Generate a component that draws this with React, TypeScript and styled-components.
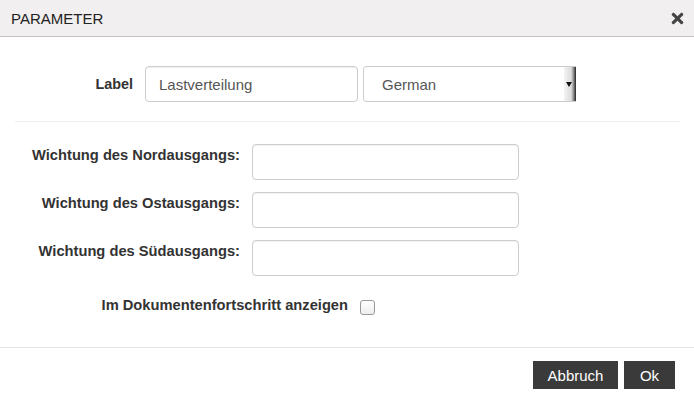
import React, { useState } from 'react';
import styled, { createGlobalStyle } from 'styled-components';
import { FaTimes } from 'react-icons/fa';

const GlobalStyle = createGlobalStyle`
  html, body {
    margin: 0;
    padding: 0;
    background: #fff;
    font-family: "Liberation Sans", Arial, sans-serif;
    color: #333;
  }
`;

const Dialog = styled.div`
  width: 694px;
  height: 402px;
  background: #fff;
  display: flex;
  flex-direction: column;
`;

const Header = styled.div`
  height: 37px;
  background: #f1efef;
  border-bottom: 1px solid #c3c3c3;
  display: flex;
  align-items: center;
  justify-content: space-between;
  padding: 0 8px 0 11px;
  box-sizing: border-box;
  flex-shrink: 0;
`;

const Title = styled.h4`
  margin: 0;
  font-size: 15px;
  font-weight: normal;
  color: #222;
  padding-top: 1px;
`;

const CloseButton = styled.button`
  border: none;
  background: none;
  padding: 0;
  color: #444;
  display: flex;
  cursor: pointer;
  margin-top: 1px;
`;

const Body = styled.div`
  flex: 1;
  padding-top: 29px;
`;

const LabelRow = styled.div`
  display: flex;
  align-items: center;
  gap: 5px;
`;

const LabelText = styled.label`
  width: 133px;
  text-align: right;
  font-weight: bold;
  font-size: 14.4px;
  color: #333;
  margin-right: 7px;
`;

const TextInput = styled.input<{ $width: number }>`
  width: ${({ $width }) => $width}px;
  height: 36px;
  box-sizing: border-box;
  border: 1px solid #ccc;
  border-radius: 4px;
  padding: 0 13px;
  font-family: "Liberation Sans", Arial, sans-serif;
  font-size: 15px;
  color: #555;
  box-shadow: inset 0 1px 1px rgba(0, 0, 0, 0.06);
  outline: none;
`;

const SelectBox = styled.div`
  width: 213px;
  height: 36px;
  box-sizing: border-box;
  border: 1px solid #ccc;
  border-right: none;
  border-radius: 4px 0 0 4px;
  display: flex;
  overflow: hidden;
`;

const Select = styled.select`
  flex: 1;
  appearance: none;
  border: none;
  background: #fff;
  padding: 0 18px;
  font-family: "Liberation Sans", Arial, sans-serif;
  font-size: 15px;
  color: #555;
  outline: none;
`;

const ArrowStrip = styled.div`
  width: 10px;
  background: linear-gradient(to right, #f4f4f4 0%, #dcdcdc 60%, #8a8a8a 80%, #222 100%);
  display: flex;
  align-items: center;
  justify-content: center;
  padding-right: 2px;
  &::after {
    content: '';
    border-left: 3px solid transparent;
    border-right: 3px solid transparent;
    border-top: 5px solid #111;
  }
`;

const Divider = styled.hr`
  margin: 19px 14px 22px 15px;
  border: none;
  border-top: 1px solid #eee;
`;

const FieldList = styled.div`
  display: flex;
  flex-direction: column;
  gap: 12px;
`;

const FieldRow = styled.div`
  display: flex;
  align-items: flex-start;
  gap: 12px;
`;

const FieldLabel = styled.label`
  width: 240px;
  text-align: right;
  font-weight: bold;
  font-size: 14.7px;
  line-height: 20px;
  padding-top: 1px;
  color: #333;
`;

const CheckRow = styled.div`
  display: flex;
  align-items: center;
  gap: 12px;
  margin-top: 20px;
`;

const CheckLabel = styled.label`
  width: 348px;
  text-align: right;
  font-weight: bold;
  font-size: 14.7px;
  color: #333;
  padding-bottom: 2px;
`;

const CheckBox = styled.input`
  appearance: none;
  margin: 0;
  margin-top: 4px;
  width: 15px;
  height: 15px;
  border: 1px solid #999;
  border-radius: 3px;
  background: linear-gradient(#fff, #ededed);
`;

const Footer = styled.div`
  border-top: 1px solid #e5e5e5;
  height: 55px;
  box-sizing: border-box;
  display: flex;
  justify-content: flex-end;
  align-items: flex-start;
  gap: 6px;
  padding: 13px 19px 0 0;
`;

const Button = styled.button<{ $width: number }>`
  width: ${({ $width }) => $width}px;
  height: 28px;
  background: #3a3a3a;
  color: #fff;
  border: none;
  font-family: "Liberation Sans", Arial, sans-serif;
  font-size: 15px;
  padding: 0;
  cursor: pointer;
`;

const fields = [
  'Wichtung des Nordausgangs:',
  'Wichtung des Ostausgangs:',
  'Wichtung des Südausgangs:',
];

const App: React.FC = () => {
  const [label, setLabel] = useState('Lastverteilung');

  return (
    <Dialog>
      <GlobalStyle />
      <Header>
        <Title>PARAMETER</Title>
        <CloseButton aria-label="close">
          <FaTimes size={17} />
        </CloseButton>
      </Header>
      <Body>
        <LabelRow>
          <LabelText>Label</LabelText>
          <TextInput $width={213} value={label} onChange={(e) => setLabel(e.target.value)} />
          <SelectBox>
            <Select defaultValue="de">
              <option value="de">German</option>
              <option value="en">English</option>
            </Select>
            <ArrowStrip />
          </SelectBox>
        </LabelRow>
        <Divider />
        <FieldList>
          {fields.map((f) => (
            <FieldRow key={f}>
              <FieldLabel>{f}</FieldLabel>
              <TextInput $width={267} />
            </FieldRow>
          ))}
        </FieldList>
        <CheckRow>
          <CheckLabel>Im Dokumentenfortschritt anzeigen</CheckLabel>
          <CheckBox type="checkbox" />
        </CheckRow>
      </Body>
      <Footer>
        <Button $width={85}>Abbruch</Button>
        <Button $width={51}>Ok</Button>
      </Footer>
    </Dialog>
  );
};

export default App;
